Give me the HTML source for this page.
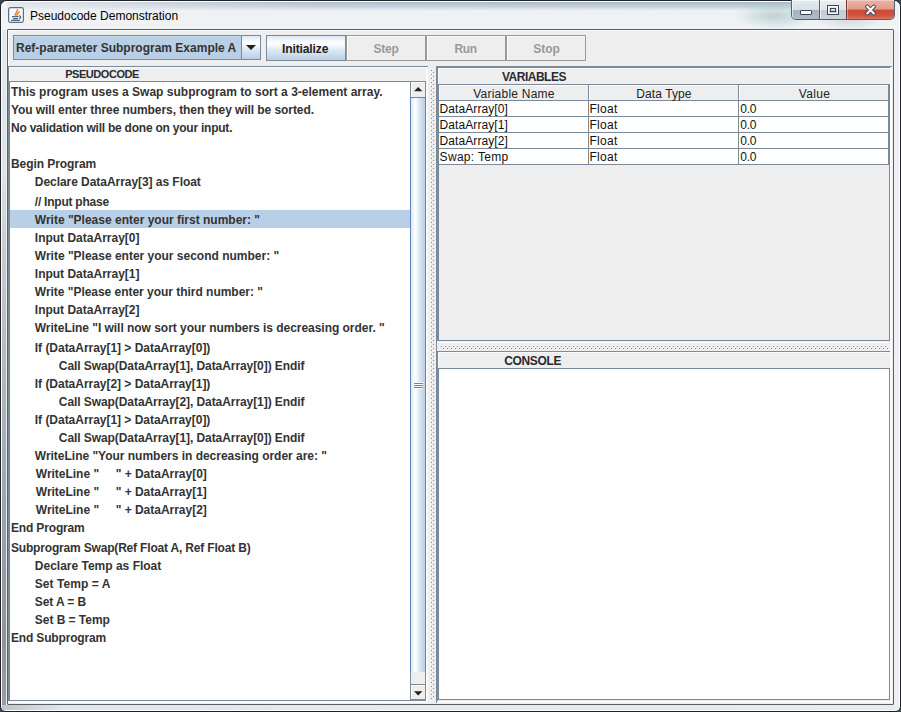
<!DOCTYPE html>
<html><head><meta charset="utf-8"><title>Pseudocode Demonstration</title>
<style>
html,body{margin:0;padding:0}
body{width:901px;height:712px;position:relative;overflow:hidden;background:#3a4650;font-family:"Liberation Sans",sans-serif}
.r{position:absolute}
.t{position:absolute;white-space:pre;line-height:20px}
</style></head><body>
<div class="r" style="left:0;top:0;width:899px;height:710px;border:1px solid #1e2226;border-radius:7px 7px 6px 6px;background:linear-gradient(180deg,#f6f6f8 0px,#eef1f4 12px,#f2f3f5 28px,#eceef2 100%)"></div>
<div class="r" style="left:7px;top:2px;width:886px;height:9px;background:linear-gradient(180deg,rgba(150,170,190,0.85),rgba(175,192,206,0.6) 60%,rgba(230,236,240,0));-webkit-mask-image:linear-gradient(90deg,rgba(0,0,0,0.25),rgba(0,0,0,0.9) 35%,#000 100%);"></div>
<div class="r" style="left:735px;top:2px;width:80px;height:28px;border-radius:50%;background:radial-gradient(closest-side,rgba(150,175,175,0.5),rgba(150,200,200,0.25) 60%,rgba(150,210,210,0))"></div>
<div class="r" style="left:815px;top:12px;width:70px;height:18px;border-radius:50%;background:radial-gradient(closest-side,rgba(160,175,180,0.35),rgba(160,175,180,0))"></div>
<div class="r" style="left:1px;top:1px;width:897px;height:708px;border:1px solid rgba(255,255,255,0.85);border-radius:6px 6px 5px 5px"></div>
<div class="r" style="left:2px;top:30px;width:4px;height:675px;background:linear-gradient(180deg,#e3e8ec 0px,#dde3e7 140px,#c8cacd 220px,#adb4ba 370px,#9aa6b0 470px,#909498 610px,#9a9ea2 675px);"></div>
<div class="r" style="left:895px;top:30px;width:4px;height:675px;background:#f1eff3;"></div>
<div class="r" style="left:2px;top:705px;width:897px;height:5px;background:linear-gradient(90deg,#c0c4c8,#dfe6ec 60px,#e6eaee 400px,#e9ebee);"></div>
<svg class="r" style="left:8px;top:7px" width="16" height="16" viewBox="0 0 16 16">
<rect x="0.6" y="0.6" width="14.8" height="14.8" rx="1.8" fill="#f8f9fb" stroke="#56708a" stroke-width="1.2"/>
<path d="M9.6 2.8 L7 8.2 M11.2 4.8 L8.8 8.2" stroke="#f07a1a" stroke-width="1.4" stroke-linecap="round" fill="none"/>
<path d="M4 9.6 H10.6 M5 11.6 H10 M3 13.4 H12" stroke="#4f6a80" stroke-width="1.1"/>
<path d="M11 8.6 Q14.4 9.8 11.2 12" stroke="#4f6a80" stroke-width="1.3" fill="none"/>
</svg>
<div class="t" style="left:30px;top:6px;font-size:12px;color:#000;">Pseudocode Demonstration</div>
<div class="r" style="left:791px;top:0;width:102px;height:19px;border:1px solid #56606a;border-top:none;border-radius:0 0 5px 5px;overflow:hidden"><div class="r" style="left:0;top:0;width:27px;height:19px;background:linear-gradient(180deg,#e6edf1 0,#d6e0e6 50%,#a4b4bf 55%,#aebdc7 100%);box-shadow:inset 1px 1px 0 rgba(255,255,255,0.6)"></div><div class="r" style="left:27px;top:0;width:1px;height:19px;background:#56606a"></div><div class="r" style="left:28px;top:0;width:26px;height:19px;background:linear-gradient(180deg,#e8eef2 0,#dde5ea 50%,#c2ccd3 55%,#cbd4da 100%);box-shadow:inset 1px 1px 0 rgba(255,255,255,0.6)"></div><div class="r" style="left:54px;top:0;width:1px;height:19px;background:#6b3a30"></div><div class="r" style="left:55px;top:0;width:47px;height:19px;background:linear-gradient(180deg,#ebb2a5 0,#e39c8a 48%,#cc4a32 53%,#d05440 82%,#da7662 100%);box-shadow:inset 1px 1px 0 rgba(255,255,255,0.35)"></div></div>
<div class="r" style="left:800px;top:10px;width:10px;height:3px;background:#fff;border:1px solid #3c4656;border-radius:1px"></div>
<div class="r" style="left:827px;top:5px;width:10px;height:8px;background:transparent;border:1px solid #3c4656;box-shadow:inset 0 0 0 1px #fff"></div>
<div class="r" style="left:830px;top:8px;width:4px;height:2px;background:transparent;border:1px solid #3c4656;"></div>
<svg class="r" style="left:864px;top:4px" width="13" height="12" viewBox="0 0 13 12">
<path d="M3.2 2.6 L9.8 9.4 M9.8 2.6 L3.2 9.4" stroke="#3a3f58" stroke-width="4" stroke-linecap="round"/>
<path d="M3.2 2.6 L9.8 9.4 M9.8 2.6 L3.2 9.4" stroke="#ffffff" stroke-width="2.2" stroke-linecap="round"/>
</svg>
<div class="r" style="left:7px;top:29px;width:885px;height:674px;background:#eeeeee;border:1px solid #5b5f63;border-radius:1px"></div>
<div class="r" style="left:8px;top:30px;width:884px;height:1px;background:#fbfbfb;"></div>
<div class="r" style="left:8px;top:30px;width:1px;height:36px;background:#fbfbfb;"></div>
<div class="r" style="left:13px;top:35px;width:246px;height:23px;background:#b8cfe5;border:1px solid #7a8a99"></div>
<div class="r" style="left:14px;top:36px;width:226px;height:1px;background:#c9def0;"></div>
<div class="r" style="left:241px;top:35px;width:1px;height:25px;background:#7a8a99;"></div>
<div class="r" style="left:242px;top:36px;width:18px;height:23px;background:linear-gradient(180deg,#dde8f3 0%,#ffffff 30%,#dde8f3 60%,#b8cfe5 100%);"></div>
<svg class="r" style="left:246px;top:45px" width="10" height="5"><path d="M0 0H10L5 5Z" fill="#222"/></svg>
<div id="combo" class="t" style="left:16.00px;top:38px;font-size:12px;font-weight:bold;color:#333;letter-spacing:0.000px;">Ref-parameter Subprogram Example A</div>
<div class="r" style="left:266px;top:35px;width:78px;height:24px;background:linear-gradient(180deg,#dde8f3 0%,#ffffff 30%,#dde8f3 60%,#b8cfe5 100%);border:1px solid #7a8a99"></div>
<div id="b_init" class="t" style="left:282.00px;top:39px;font-size:12px;font-weight:bold;color:#222;letter-spacing:-0.112px;">Initialize</div>
<div class="r" style="left:346px;top:35px;width:78px;height:24px;background:#eeeeee;border:1px solid #999"></div>
<div class="r" style="left:347px;top:36px;width:78px;height:1px;background:#fafafa;"></div>
<div class="r" style="left:347px;top:36px;width:1px;height:24px;background:#fafafa;"></div>
<div class="r" style="left:426px;top:35px;width:78px;height:24px;background:#eeeeee;border:1px solid #999"></div>
<div class="r" style="left:427px;top:36px;width:78px;height:1px;background:#fafafa;"></div>
<div class="r" style="left:427px;top:36px;width:1px;height:24px;background:#fafafa;"></div>
<div class="r" style="left:506px;top:35px;width:78px;height:24px;background:#eeeeee;border:1px solid #999"></div>
<div class="r" style="left:507px;top:36px;width:78px;height:1px;background:#fafafa;"></div>
<div class="r" style="left:507px;top:36px;width:1px;height:24px;background:#fafafa;"></div>
<div id="b_step" class="t" style="left:373.40px;top:39px;font-size:12px;font-weight:bold;color:#999;letter-spacing:-0.199px;">Step</div>
<div id="b_run" class="t" style="left:454.60px;top:39px;font-size:12px;font-weight:bold;color:#999;letter-spacing:-0.400px;">Run</div>
<div id="b_stop" class="t" style="left:533.20px;top:39px;font-size:12px;font-weight:bold;color:#999;letter-spacing:0.000px;">Stop</div>
<div class="r" style="left:8px;top:66px;width:884px;height:1px;background:#eeeeee;"></div>
<div class="r" style="left:8px;top:66px;width:420px;height:1px;background:#7a8a99;"></div>
<div class="r" style="left:8px;top:66px;width:1px;height:635px;background:#7a8a99;"></div>
<div class="r" style="left:9px;top:67px;width:418px;height:1px;background:#fafafa;"></div>
<div class="r" style="left:9px;top:67px;width:1px;height:14px;background:#fafafa;"></div>
<div class="r" style="left:426px;top:67px;width:2px;height:636px;background:#fafafa;"></div>
<div class="r" style="left:8px;top:701px;width:420px;height:2px;background:#fafafa;"></div>
<div id="hdr_pc" class="t" style="left:65.20px;top:64px;font-size:11px;font-weight:bold;color:#2a2a30;letter-spacing:-0.444px;">PSEUDOCODE</div>
<div class="r" style="left:9px;top:81px;width:417px;height:1px;background:#7a8a99;"></div>
<div class="r" style="left:9px;top:81px;width:1px;height:620px;background:#7a8a99;"></div>
<div class="r" style="left:9px;top:700px;width:417px;height:1px;background:#7a8a99;"></div>
<div class="r" style="left:10px;top:82px;width:400px;height:618px;background:#fff;"></div>
<div class="r" style="left:10px;top:210px;width:400px;height:18px;background:#b8cfe5;"></div>
<div id="L0" class="t" style="left:11.00px;top:82px;font-size:12px;font-weight:bold;color:#333;letter-spacing:0.016px;">This program uses a Swap subprogram to sort a 3-element array.</div>
<div id="L1" class="t" style="left:11.00px;top:100px;font-size:12px;font-weight:bold;color:#333;letter-spacing:-0.077px;">You will enter three numbers, then they will be sorted.</div>
<div id="L2" class="t" style="left:11.00px;top:118px;font-size:12px;font-weight:bold;color:#333;letter-spacing:-0.230px;">No validation will be done on your input.</div>
<div id="L3" class="t" style="left:11.00px;top:154px;font-size:12px;font-weight:bold;color:#333;letter-spacing:-0.067px;">Begin Program</div>
<div id="L4" class="t" style="left:34.80px;top:172px;font-size:12px;font-weight:bold;color:#333;letter-spacing:-0.049px;">Declare DataArray[3] as Float</div>
<div id="L5" class="t" style="left:34.80px;top:192px;font-size:12px;font-weight:bold;color:#333;letter-spacing:-0.231px;">// Input phase</div>
<div id="L6" class="t" style="left:34.80px;top:210px;font-size:12px;font-weight:bold;color:#333;letter-spacing:0.000px;">Write "Please enter your first number: "</div>
<div id="L7" class="t" style="left:34.80px;top:228px;font-size:12px;font-weight:bold;color:#333;letter-spacing:0.000px;">Input DataArray[0]</div>
<div id="L8" class="t" style="left:34.80px;top:246px;font-size:12px;font-weight:bold;color:#333;letter-spacing:-0.005px;">Write "Please enter your second number: "</div>
<div id="L9" class="t" style="left:34.80px;top:264px;font-size:12px;font-weight:bold;color:#333;letter-spacing:0.000px;">Input DataArray[1]</div>
<div id="L10" class="t" style="left:34.80px;top:282px;font-size:12px;font-weight:bold;color:#333;letter-spacing:-0.029px;">Write "Please enter your third number: "</div>
<div id="L11" class="t" style="left:34.80px;top:300px;font-size:12px;font-weight:bold;color:#333;letter-spacing:0.000px;">Input DataArray[2]</div>
<div id="L12" class="t" style="left:34.80px;top:318px;font-size:12px;font-weight:bold;color:#333;letter-spacing:-0.033px;">WriteLine "I will now sort your numbers is decreasing order. "</div>
<div id="L13" class="t" style="left:34.80px;top:338px;font-size:12px;font-weight:bold;color:#333;letter-spacing:-0.027px;">If (DataArray[1] &gt; DataArray[0])</div>
<div id="L14" class="t" style="left:58.80px;top:356px;font-size:12px;font-weight:bold;color:#333;letter-spacing:-0.071px;">Call Swap(DataArray[1], DataArray[0]) Endif</div>
<div id="L15" class="t" style="left:34.80px;top:374px;font-size:12px;font-weight:bold;color:#333;letter-spacing:-0.027px;">If (DataArray[2] &gt; DataArray[1])</div>
<div id="L16" class="t" style="left:58.80px;top:392px;font-size:12px;font-weight:bold;color:#333;letter-spacing:-0.071px;">Call Swap(DataArray[2], DataArray[1]) Endif</div>
<div id="L17" class="t" style="left:34.80px;top:410px;font-size:12px;font-weight:bold;color:#333;letter-spacing:-0.027px;">If (DataArray[1] &gt; DataArray[0])</div>
<div id="L18" class="t" style="left:58.80px;top:428px;font-size:12px;font-weight:bold;color:#333;letter-spacing:-0.071px;">Call Swap(DataArray[1], DataArray[0]) Endif</div>
<div id="L19" class="t" style="left:34.80px;top:446px;font-size:12px;font-weight:bold;color:#333;letter-spacing:-0.016px;">WriteLine "Your numbers in decreasing order are: "</div>
<div id="L20" class="t" style="left:35.80px;top:464px;font-size:12px;font-weight:bold;color:#333;letter-spacing:-0.018px;">WriteLine "     " + DataArray[0]</div>
<div id="L21" class="t" style="left:35.80px;top:482px;font-size:12px;font-weight:bold;color:#333;letter-spacing:-0.018px;">WriteLine "     " + DataArray[1]</div>
<div id="L22" class="t" style="left:35.80px;top:500px;font-size:12px;font-weight:bold;color:#333;letter-spacing:-0.018px;">WriteLine "     " + DataArray[2]</div>
<div id="L23" class="t" style="left:11.00px;top:518px;font-size:12px;font-weight:bold;color:#333;letter-spacing:-0.160px;">End Program</div>
<div id="L24" class="t" style="left:11.00px;top:538px;font-size:12px;font-weight:bold;color:#333;letter-spacing:-0.180px;">Subprogram Swap(Ref Float A, Ref Float B)</div>
<div id="L25" class="t" style="left:34.80px;top:556px;font-size:12px;font-weight:bold;color:#333;letter-spacing:0.000px;">Declare Temp as Float</div>
<div id="L26" class="t" style="left:34.80px;top:574px;font-size:12px;font-weight:bold;color:#333;letter-spacing:0.056px;">Set Temp = A</div>
<div id="L27" class="t" style="left:34.80px;top:592px;font-size:12px;font-weight:bold;color:#333;letter-spacing:-0.100px;">Set A = B</div>
<div id="L28" class="t" style="left:34.80px;top:610px;font-size:12px;font-weight:bold;color:#333;letter-spacing:-0.034px;">Set B = Temp</div>
<div id="L29" class="t" style="left:11.00px;top:628px;font-size:12px;font-weight:bold;color:#333;letter-spacing:-0.167px;">End Subprogram</div>
<div class="r" style="left:410px;top:82px;width:1px;height:618px;background:#7a8a99;"></div>
<div class="r" style="left:425px;top:82px;width:1px;height:618px;background:#7a8a99;"></div>
<div class="r" style="left:411px;top:82px;width:14px;height:15px;background:#eeeeee;"></div>
<div class="r" style="left:411px;top:82px;width:14px;height:1px;background:#fff;"></div>
<div class="r" style="left:411px;top:82px;width:1px;height:15px;background:#fff;"></div>
<svg class="r" style="left:414px;top:87px" width="9" height="5"><path d="M0 4.2H8.4L4.2 0Z" fill="#222"/></svg>
<div class="r" style="left:410px;top:97px;width:1px;height:576px;background:#6382bf;"></div>
<div class="r" style="left:410px;top:97px;width:15px;height:1px;background:#6382bf;"></div>
<div class="r" style="left:410px;top:672px;width:15px;height:1px;background:#6382bf;"></div>
<div class="r" style="left:411px;top:98px;width:14px;height:574px;background:linear-gradient(90deg,#dde8f3 0%,#ffffff 30%,#dde8f3 60%,#b8cfe5 100%);"></div>
<div class="r" style="left:425px;top:97px;width:1px;height:576px;background:#6d84a6;"></div>
<div class="r" style="left:414px;top:383px;width:9px;height:1px;background:#6382bf;"></div>
<div class="r" style="left:414px;top:384px;width:9px;height:1px;background:#ffffff;"></div>
<div class="r" style="left:414px;top:385px;width:9px;height:1px;background:#6382bf;"></div>
<div class="r" style="left:414px;top:386px;width:9px;height:1px;background:#ffffff;"></div>
<div class="r" style="left:414px;top:387px;width:9px;height:1px;background:#6382bf;"></div>
<div class="r" style="left:414px;top:388px;width:9px;height:1px;background:#ffffff;"></div>
<div class="r" style="left:413px;top:382px;width:11px;height:1px;background:rgba(255,255,255,0.7);"></div>
<div class="r" style="left:411px;top:672px;width:14px;height:12px;background:#eeeeee;"></div>
<div class="r" style="left:411px;top:684px;width:14px;height:1px;background:#7a8a99;"></div>
<div class="r" style="left:411px;top:685px;width:14px;height:15px;background:#eeeeee;"></div>
<div class="r" style="left:411px;top:685px;width:14px;height:1px;background:#fff;"></div>
<div class="r" style="left:411px;top:685px;width:1px;height:14px;background:#fff;"></div>
<div class="r" style="left:411px;top:699px;width:14px;height:1px;background:#7a8a99;"></div>
<svg class="r" style="left:414px;top:691px" width="9" height="5"><path d="M0 0.2H8.4L4.2 4.4Z" fill="#222"/></svg>
<svg class="r" style="left:428px;top:66px" width="8" height="637">
<defs><pattern id="bv" x="0" y="0" width="4" height="4" patternUnits="userSpaceOnUse">
<rect x="3" y="0" width="1" height="1" fill="#7a8a99"/><rect x="1" y="2" width="1" height="1" fill="#7a8a99"/>
</pattern></defs>
<rect x="2" y="4" width="4" height="630" fill="url(#bv)"/>
</svg>
<div class="r" style="left:436px;top:66px;width:456px;height:1px;background:#7a8a99;"></div>
<div class="r" style="left:436px;top:66px;width:1px;height:637px;background:#7a8a99;"></div>
<div class="r" style="left:437px;top:67px;width:455px;height:1px;background:#7a8a99;"></div>
<div class="r" style="left:437px;top:67px;width:1px;height:274px;background:#7a8a99;"></div>
<div class="r" style="left:438px;top:68px;width:453px;height:1px;background:#fafafa;"></div>
<div class="r" style="left:438px;top:68px;width:1px;height:16px;background:#fafafa;"></div>
<div id="hdr_var" class="t" style="left:502.00px;top:67px;font-size:12px;font-weight:bold;color:#2a2a30;letter-spacing:-0.500px;">VARIABLES</div>
<div class="r" style="left:438px;top:84px;width:452px;height:1px;background:#7a8a99;"></div>
<div class="r" style="left:438px;top:84px;width:1px;height:257px;background:#7a8a99;"></div>
<div class="r" style="left:889px;top:84px;width:1px;height:257px;background:#7a8a99;"></div>
<div class="r" style="left:438px;top:340px;width:452px;height:1px;background:#7a8a99;"></div>
<div class="r" style="left:439px;top:85px;width:450px;height:15px;background:#eeeeee;"></div>
<div class="r" style="left:439px;top:85px;width:450px;height:1px;background:#fff;"></div>
<div class="r" style="left:439px;top:85px;width:1px;height:15px;background:#fff;"></div>
<div class="r" style="left:589px;top:85px;width:1px;height:15px;background:#fff;"></div>
<div class="r" style="left:739px;top:85px;width:1px;height:15px;background:#fff;"></div>
<div class="r" style="left:588px;top:85px;width:1px;height:80px;background:#7a8a99;"></div>
<div class="r" style="left:738px;top:85px;width:1px;height:80px;background:#7a8a99;"></div>
<div class="r" style="left:888px;top:85px;width:1px;height:80px;background:#7a8a99;"></div>
<div class="r" style="left:439px;top:100px;width:450px;height:1px;background:#7a8a99;"></div>
<div id="th0" class="t" style="left:473.20px;top:84px;font-size:12px;font-weight:normal;color:#222;letter-spacing:0.234px;">Variable Name</div>
<div id="th1" class="t" style="left:636.20px;top:84px;font-size:12px;font-weight:normal;color:#222;letter-spacing:0.100px;">Data Type</div>
<div id="th2" class="t" style="left:798.70px;top:84px;font-size:12px;font-weight:normal;color:#222;letter-spacing:0.375px;">Value</div>
<div class="r" style="left:439px;top:101px;width:149px;height:15px;background:#fff;"></div>
<div class="r" style="left:589px;top:101px;width:149px;height:15px;background:#fff;"></div>
<div class="r" style="left:739px;top:101px;width:149px;height:15px;background:#fff;"></div>
<div class="r" style="left:439px;top:116px;width:450px;height:1px;background:#7a8a99;"></div>
<div id="td00" class="t" style="left:439.60px;top:99px;font-size:12px;font-weight:normal;color:#111;letter-spacing:0.074px;">DataArray[0]</div>
<div id="td01" class="t" style="left:589.40px;top:99px;font-size:12px;font-weight:normal;color:#111;letter-spacing:0.300px;">Float</div>
<div id="td02" class="t" style="left:740.20px;top:99px;font-size:12px;font-weight:normal;color:#111;letter-spacing:-0.200px;">0.0</div>
<div class="r" style="left:439px;top:117px;width:149px;height:15px;background:#fff;"></div>
<div class="r" style="left:589px;top:117px;width:149px;height:15px;background:#fff;"></div>
<div class="r" style="left:739px;top:117px;width:149px;height:15px;background:#fff;"></div>
<div class="r" style="left:439px;top:132px;width:450px;height:1px;background:#7a8a99;"></div>
<div id="td10" class="t" style="left:439.60px;top:115px;font-size:12px;font-weight:normal;color:#111;letter-spacing:0.074px;">DataArray[1]</div>
<div id="td11" class="t" style="left:589.40px;top:115px;font-size:12px;font-weight:normal;color:#111;letter-spacing:0.300px;">Float</div>
<div id="td12" class="t" style="left:740.20px;top:115px;font-size:12px;font-weight:normal;color:#111;letter-spacing:-0.200px;">0.0</div>
<div class="r" style="left:439px;top:133px;width:149px;height:15px;background:#fff;"></div>
<div class="r" style="left:589px;top:133px;width:149px;height:15px;background:#fff;"></div>
<div class="r" style="left:739px;top:133px;width:149px;height:15px;background:#fff;"></div>
<div class="r" style="left:439px;top:148px;width:450px;height:1px;background:#7a8a99;"></div>
<div id="td20" class="t" style="left:439.60px;top:131px;font-size:12px;font-weight:normal;color:#111;letter-spacing:0.074px;">DataArray[2]</div>
<div id="td21" class="t" style="left:589.40px;top:131px;font-size:12px;font-weight:normal;color:#111;letter-spacing:0.300px;">Float</div>
<div id="td22" class="t" style="left:740.20px;top:131px;font-size:12px;font-weight:normal;color:#111;letter-spacing:-0.200px;">0.0</div>
<div class="r" style="left:439px;top:149px;width:149px;height:15px;background:#fff;"></div>
<div class="r" style="left:589px;top:149px;width:149px;height:15px;background:#fff;"></div>
<div class="r" style="left:739px;top:149px;width:149px;height:15px;background:#fff;"></div>
<div class="r" style="left:439px;top:164px;width:450px;height:1px;background:#7a8a99;"></div>
<div id="td30" class="t" style="left:439.60px;top:147px;font-size:12px;font-weight:normal;color:#111;letter-spacing:0.310px;">Swap: Temp</div>
<div id="td31" class="t" style="left:589.40px;top:147px;font-size:12px;font-weight:normal;color:#111;letter-spacing:0.300px;">Float</div>
<div id="td32" class="t" style="left:740.20px;top:147px;font-size:12px;font-weight:normal;color:#111;letter-spacing:-0.200px;">0.0</div>
<div class="r" style="left:437px;top:341px;width:455px;height:10px;background:#eeeeee;"></div>
<div class="r" style="left:437px;top:342px;width:454px;height:1px;background:#fbfbfb;"></div>
<svg class="r" style="left:437px;top:341px" width="455" height="10">
<defs><pattern id="bh" x="0" y="0" width="4" height="4" patternUnits="userSpaceOnUse">
<rect x="0" y="1" width="1" height="1" fill="#7a8a99"/><rect x="2" y="3" width="1" height="1" fill="#7a8a99"/>
</pattern></defs>
<rect x="4" y="4" width="448" height="4" fill="url(#bh)"/>
</svg>
<div class="r" style="left:437px;top:351px;width:455px;height:1px;background:#7a8a99;"></div>
<div class="r" style="left:437px;top:351px;width:1px;height:351px;background:#7a8a99;"></div>
<div class="r" style="left:438px;top:352px;width:453px;height:1px;background:#fafafa;"></div>
<div class="r" style="left:438px;top:352px;width:1px;height:16px;background:#fafafa;"></div>
<div id="hdr_con" class="t" style="left:504.20px;top:351px;font-size:12px;font-weight:bold;color:#2a2a30;letter-spacing:-0.333px;">CONSOLE</div>
<div class="r" style="left:438px;top:368px;width:452px;height:1px;background:#7a8a99;"></div>
<div class="r" style="left:438px;top:368px;width:1px;height:332px;background:#7a8a99;"></div>
<div class="r" style="left:889px;top:368px;width:1px;height:332px;background:#7a8a99;"></div>
<div class="r" style="left:438px;top:699px;width:452px;height:1px;background:#7a8a99;"></div>
<div class="r" style="left:439px;top:369px;width:450px;height:330px;background:#fff;"></div>
<div class="r" style="left:437px;top:701px;width:455px;height:2px;background:#fafafa;"></div>
<div class="r" style="left:890px;top:67px;width:2px;height:636px;background:#fafafa;"></div>
</body></html>
